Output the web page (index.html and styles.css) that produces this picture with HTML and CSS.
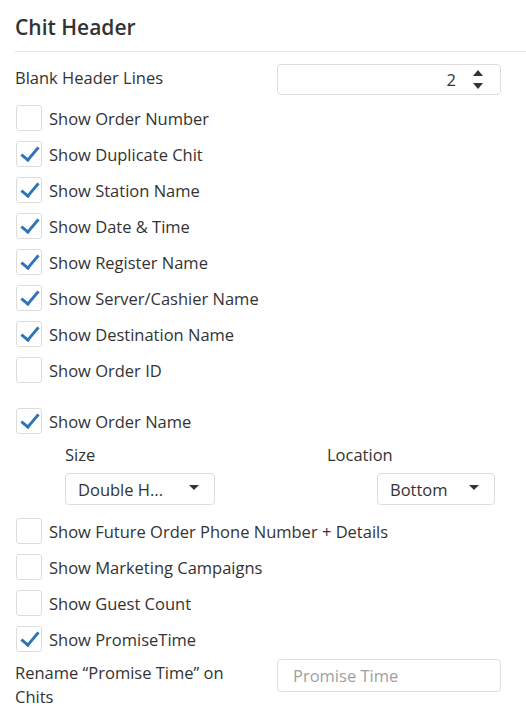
FILE: index.html
```html
<!DOCTYPE html>
<html lang="en">
<head>
  <meta charset="UTF-8" />
  <title>Chit Header</title>
  <link rel="stylesheet" href="styles.css">
</head>
<body>
  <div class="panel">
    <h2 class="panel-title">Chit Header</h2>

    <div class="field-row">
      <label class="field-label">Blank Header Lines</label>
      <div class="num-input">
        <span class="num-value">2</span>
        <span class="spinner">
          <svg width="10" height="6" viewBox="0 0 10 6"><path d="M0 6 L5 0 L10 6 Z" fill="#333"/></svg>
          <svg width="10" height="6" viewBox="0 0 10 6"><path d="M0 0 L5 6 L10 0 Z" fill="#333"/></svg>
        </span>
      </div>
    </div>

    <div class="checks">
      <div class="check-row"><span class="box"></span>Show Order Number</div>
      <div class="check-row"><span class="box on"></span>Show Duplicate Chit</div>
      <div class="check-row"><span class="box on"></span>Show Station Name</div>
      <div class="check-row"><span class="box on"></span>Show Date &amp; Time</div>
      <div class="check-row"><span class="box on"></span>Show Register Name</div>
      <div class="check-row"><span class="box on"></span>Show Server/Cashier Name</div>
      <div class="check-row"><span class="box on"></span>Show Destination Name</div>
      <div class="check-row"><span class="box"></span>Show Order ID</div>
    </div>

    <div class="check-row order-name"><span class="box on"></span>Show Order Name</div>

    <div class="sub-options">
      <div class="sub-col">
        <div class="sub-label">Size</div>
        <div class="select size-select">Double H... <span class="caret"></span></div>
      </div>
      <div class="sub-col right">
        <div class="sub-label">Location</div>
        <div class="select loc-select">Bottom <span class="caret"></span></div>
      </div>
    </div>

    <div class="checks">
      <div class="check-row"><span class="box"></span>Show Future Order Phone Number + Details</div>
      <div class="check-row"><span class="box"></span>Show Marketing Campaigns</div>
      <div class="check-row"><span class="box"></span>Show Guest Count</div>
      <div class="check-row"><span class="box on"></span>Show PromiseTime</div>
    </div>

    <div class="field-row rename">
      <label class="field-label">Rename “Promise Time” on Chits</label>
      <input class="text-input" type="text" placeholder="Promise Time" />
    </div>
  </div>
</body>
</html>
```

FILE: styles.css
```css
body {
  margin: 0;
  font-family: "Open Sans", "Noto Sans", sans-serif;
  color: #333;
  background: #fff;
}

.panel {
  padding: 0 0 0 15px;
}

.panel-title {
  margin: 0;
  padding: 12px 0 9px;
  font-size: 21px;
  font-weight: 600;
  line-height: 30px;
  border-bottom: 1px solid #e5e5e5;
}

.field-row {
  display: flex;
  align-items: flex-start;
  justify-content: space-between;
  padding-right: 25px;
  margin-top: 12px;
  font-size: 16.5px;
}

.field-label {
  width: 240px;
  line-height: 24px;
  margin-top: 2px;
}

.num-input {
  width: 224px;
  height: 31px;
  box-sizing: border-box;
  border: 1px solid #ddd;
  border-radius: 4px;
  display: flex;
  align-items: center;
  justify-content: flex-end;
  padding-right: 17px;
}

.num-value {
  margin-right: 17px;
}

.spinner {
  display: flex;
  flex-direction: column;
  gap: 7px;
}
.spinner svg { display: block; }

.checks {
  display: flex;
  flex-direction: column;
  gap: 10px;
  margin-top: 10px;
}

.check-row {
  display: flex;
  align-items: center;
  gap: 7px;
  font-size: 16.5px;
  height: 26px;
  padding-left: 1px;
}

.box {
  width: 26px;
  height: 26px;
  box-sizing: border-box;
  border: 1px solid #ddd;
  border-radius: 3px;
  position: relative;
  flex-shrink: 0;
}

.box.on::after {
  content: "";
  position: absolute;
  left: 8px;
  top: 1px;
  width: 7px;
  height: 15px;
  border: solid #2e74b8;
  border-width: 0 3px 3px 0;
  transform: rotate(40deg);
}

.order-name {
  margin-top: 25px;
}

.sub-options {
  display: flex;
  justify-content: space-between;
  padding-left: 50px;
  padding-right: 31px;
  margin-top: 9px;
  margin-bottom: 13px;
}

.sub-col.right {
  display: flex;
  flex-direction: column;
  align-items: flex-end;
}

.sub-label {
  font-size: 16.5px;
  line-height: 24px;
  margin-bottom: 6px;
}
.sub-col.right .sub-label {
  align-self: flex-start;
  margin-left: -50px;
}

.select {
  height: 32px;
  box-sizing: border-box;
  border: 1px solid #ddd;
  border-radius: 4px;
  display: flex;
  align-items: center;
  justify-content: space-between;
  padding: 0 15px 0 12px;
  font-size: 16.5px;
}
.size-select { width: 150px; }
.loc-select { width: 118px; }

.caret {
  width: 0;
  height: 0;
  border-left: 5px solid transparent;
  border-right: 5px solid transparent;
  border-top: 5px solid #333;
  margin-top: -4px;
}

.rename {
  margin-top: 7px;
}

.rename .field-label {
  width: 230px;
}

.text-input {
  width: 224px;
  height: 33px;
  box-sizing: border-box;
  border: 1px solid #ddd;
  border-radius: 4px;
  padding: 0 15px;
  font-family: inherit;
  font-size: 16.5px;
  color: #333;
}
.text-input::placeholder { color: #a0a0a0; }
```
